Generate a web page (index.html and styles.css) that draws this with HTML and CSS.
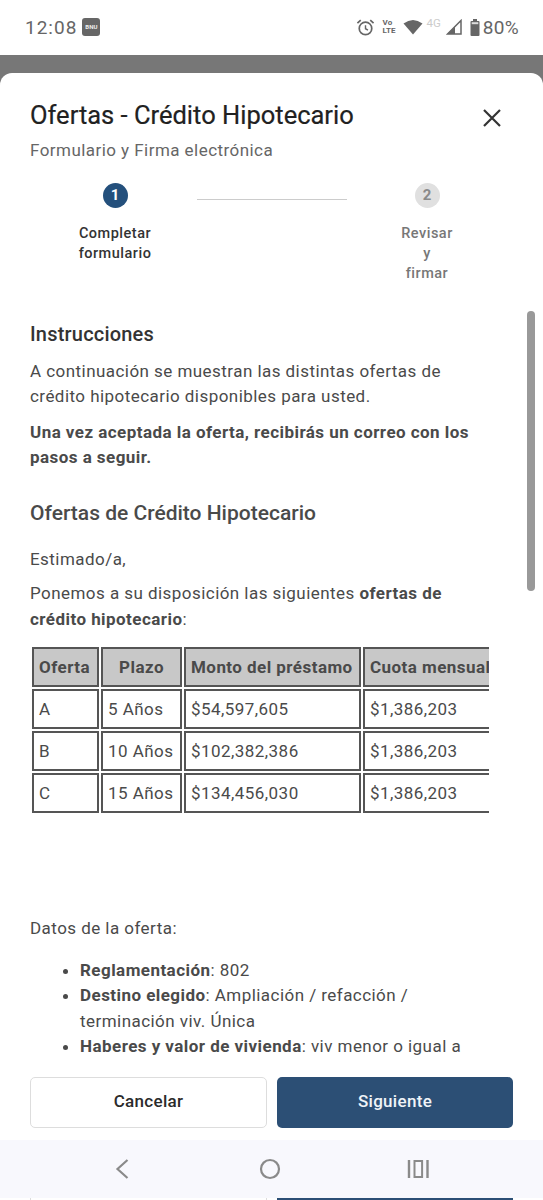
FILE: index.html
```html
<!DOCTYPE html>
<html lang="es">
<head>
<meta charset="utf-8">
<title>Ofertas - Crédito Hipotecario</title>
<link rel="stylesheet" href="styles.css">
</head>
<body>
<div class="phone">
  <header class="status">
    <div class="status-left">
      <span class="clock">12:08</span>
      <span class="app-badge">BNU</span>
    </div>
    <div class="status-right">
      <svg class="ico-alarm" viewBox="0 0 20 20" width="19" height="19"><circle cx="10" cy="11" r="6.6" fill="none" stroke="#666" stroke-width="1.8"/><path d="M10 7.5V11.3L12.6 12.8" fill="none" stroke="#666" stroke-width="1.5"/><path d="M1.5 5.5L5 2.3M18.5 5.5L15 2.3" stroke="#666" stroke-width="1.8"/></svg>
      <span class="volte"><span>Vo</span><span>LTE</span></span>
      <svg class="ico-wifi" viewBox="0 0 20 16" width="20" height="16"><path d="M0.5 4.5Q10 -2.5 19.5 4.5L10 15.5Z" fill="#666"/></svg>
      <span class="net">4G</span>
      <svg class="ico-signal" viewBox="0 0 16 16" width="16" height="16"><path d="M15 1.5V15H1.5Z" fill="none" stroke="#666" stroke-width="1.5"/><path d="M9 7.5V15H1.5Z" fill="#666"/></svg>
      <svg class="ico-battery" viewBox="0 0 10 17" width="10" height="17"><rect x="3" y="0" width="4" height="2" fill="#666"/><rect x="0.5" y="2" width="9" height="15" rx="1" fill="#666"/><rect x="1.7" y="3.2" width="6.6" height="2" fill="#ddd"/></svg>
      <span class="pct">80%</span>
    </div>
  </header>

  <div class="backdrop">
    <section class="sheet">
      <div class="sheet-head">
        <div class="titles">
          <h1>Ofertas - Crédito Hipotecario</h1>
          <p class="subtitle">Formulario y Firma electrónica</p>
        </div>
        <svg class="close" viewBox="0 0 20 20" width="20" height="20"><path d="M2 2L18 18M18 2L2 18" stroke="#333" stroke-width="2.2" fill="none"/></svg>
      </div>

      <div class="stepper">
        <div class="step step-one">
          <span class="dot dot-active">1</span>
          <span class="step-label">Completar<br>formulario</span>
        </div>
        <div class="step-line"></div>
        <div class="step step-two">
          <span class="dot dot-idle">2</span>
          <span class="step-label step-label-idle">Revisar<br>y<br>firmar</span>
        </div>
      </div>

      <div class="body-area">
        <div class="scroll-content">
          <h2 class="h-instr">Instrucciones</h2>
          <p class="para para-first">A continuación se muestran las distintas ofertas de crédito hipotecario disponibles para usted.</p>
          <p class="para para-strong"><strong>Una vez aceptada la oferta, recibirás un correo con los pasos a seguir.</strong></p>
          <h2 class="h-offers">Ofertas de Crédito Hipotecario</h2>
          <p class="para para-greet">Estimado/a,</p>
          <p class="para para-intro">Ponemos a su disposición las siguientes <strong>ofertas de crédito hipotecario</strong>:</p>
          <div class="table-wrap">
            <table class="offers">
              <thead>
                <tr><th class="c-a">Oferta</th><th class="c-b">Plazo</th><th class="c-c">Monto del préstamo</th><th class="c-d">Cuota mensual</th></tr>
              </thead>
              <tbody>
                <tr><td>A</td><td>5 Años</td><td>$54,597,605</td><td>$1,386,203</td></tr>
                <tr><td>B</td><td>10 Años</td><td>$102,382,386</td><td>$1,386,203</td></tr>
                <tr><td>C</td><td>15 Años</td><td>$134,456,030</td><td>$1,386,203</td></tr>
              </tbody>
            </table>
          </div>
          <p class="para para-data">Datos de la oferta:</p>
          <ul class="data-list">
            <li><strong>Reglamentación</strong>: 802</li>
            <li><strong>Destino elegido</strong>: Ampliación / refacción / terminación viv. Única</li>
            <li><strong>Haberes y valor de vivienda</strong>: viv menor o igual a</li>
          </ul>
        </div>
        <div class="scrollbar"></div>
      </div>

      <footer class="actions">
        <button class="btn btn-ghost" type="button">Cancelar</button>
        <button class="btn btn-primary" type="button">Siguiente</button>
      </footer>
    </section>
  </div>

  <nav class="navbar">
    <svg viewBox="0 0 16 22" width="16" height="22"><path d="M13.5 2L3.5 11L13.5 20" fill="none" stroke="#8a8a8a" stroke-width="2.2"/></svg>
    <svg viewBox="0 0 22 22" width="22" height="22"><circle cx="11" cy="11" r="9" fill="none" stroke="#8a8a8a" stroke-width="2.2"/></svg>
    <svg viewBox="0 0 22 20" width="22" height="20"><path d="M2 1V19M20.5 1V19" stroke="#8a8a8a" stroke-width="2.4"/><rect x="7.5" y="2" width="7.6" height="16" fill="none" stroke="#8a8a8a" stroke-width="2"/></svg>
  </nav>
  <div class="peek">
    <span class="peek-ghost"></span>
    <span class="peek-primary"></span>
  </div>
</div>
</body>
</html>
```
FILE: styles.css
```css
* { box-sizing: border-box; }
html, body { margin: 0; padding: 0; background: #fff; }
body { font-family: Roboto, "Liberation Sans", sans-serif; color: #4a4a4a; }
.phone { width: 543px; height: 1200px; display: flex; flex-direction: column; overflow: hidden; }

.status { height: 55px; flex: none; display: flex; justify-content: space-between; align-items: center; padding: 0 24px 1px 25px; background: #fff; color: #666; }
.status-left { display: flex; align-items: center; gap: 5px; }
.clock { font-size: 19px; letter-spacing: 1px; font-weight: 400; }
.app-badge { width: 18px; height: 18px; border-radius: 3px; background: #666; color: #eee; font-size: 6px; font-weight: 700; line-height: 18px; text-align: center; }
.status-right { display: flex; align-items: center; }
.ico-alarm { margin-right: 8px; }
.volte { display: flex; flex-direction: column; align-items: flex-start; font-size: 8px; font-weight: 700; line-height: 8px; margin-right: 7px; }
.ico-wifi { margin-right: 4px; }
.net { font-size: 11.5px; color: #ccc; margin: 0 5px 8px 0; }
.ico-signal { margin-right: 8px; }
.ico-battery { margin-right: 3px; }
.pct { font-size: 19px; letter-spacing: 0.3px; }

.backdrop { flex: 1; min-height: 0; background: #777; padding-top: 18px; display: flex; }
.sheet { flex: 1; min-width: 0; background: #fff; border-radius: 12px 12px 0 0; display: flex; flex-direction: column; }

.sheet-head { display: flex; justify-content: space-between; padding: 26px 41px 0 30px; }
h1 { margin: 0; font-size: 25.5px; line-height: 32px; font-weight: 400; color: #212121; -webkit-text-stroke: 0.2px #212121; }
.subtitle { margin: 8px 0 0; font-size: 17px; line-height: 22px; color: #666; letter-spacing: 0.45px; }
.close { margin-top: 9px; }

.stepper { display: grid; grid-template-columns: 167px 150px 166px; padding: 0 30px; margin-top: 22px; height: 117px; }
.step { display: flex; flex-direction: column; align-items: center; }
.step-one { margin-left: 3px; }
.step-two { margin-right: 3px; margin-left: -3px; }
.dot { width: 25px; height: 25px; border-radius: 50%; font-size: 15px; font-weight: 700; line-height: 25px; text-align: center; }
.dot-active { background: #24507c; color: #fff; }
.dot-idle { background: #e0e0e0; color: #8a8a8a; }
.step-label { margin-top: 16px; font-size: 14.5px; line-height: 20px; font-weight: 500; text-align: center; color: #333; letter-spacing: 0.5px; }
.step-label-idle { color: #777; }
.step-line { height: 1px; background: #ccc; margin-top: 16px; }

.body-area { flex: 1; min-height: 0; position: relative; overflow: hidden; }
.scroll-content { padding: 0 54px 0 30px; }
h2 { margin: 0; font-weight: 500; color: #333; }
.h-instr { font-size: 20px; line-height: 24px; margin-top: 22px; letter-spacing: 0.2px; }
.h-offers { font-size: 21px; line-height: 26px; margin-top: 31px; color: #4a4a4a; }
.para { margin: 0; font-size: 17px; line-height: 25px; letter-spacing: 0.45px; color: #4a4a4a; }
.para strong, .data-list strong { font-weight: 700; }
.para-first { margin-top: 13px; }
.para-strong { margin-top: 11px; line-height: 24.5px; }
.para-greet { margin-top: 21px; }
.para-intro { margin-top: 8px; line-height: 26px; }
.para-data { margin-top: 101px; }

.table-wrap { width: 459px; overflow: hidden; margin-top: 13px; }
.offers { border-collapse: separate; border-spacing: 2.5px; width: max-content; font-size: 17px; letter-spacing: 0.45px; }
.offers th, .offers td { border: 2px solid #555; height: 40px; padding: 0 5px; text-align: left; font-weight: 400; white-space: nowrap; }
.offers th { background: #c8c8c8; font-weight: 700; color: #4a4a4a; }
.offers th.c-b { text-align: center; }
.c-a { width: 67px; }
.c-b { width: 81px; }
.c-c { width: 177px; }
.c-d { width: 140px; }

.data-list { margin: 17px 0 0; padding: 0 0 0 50px; font-size: 17px; line-height: 25.3px; letter-spacing: 0.45px; color: #4a4a4a; }
.scrollbar { position: absolute; right: 8px; top: 11px; width: 8px; height: 280px; border-radius: 4px; background: #999; }

.actions { flex: none; height: 81px; display: grid; grid-template-columns: 237px 236px; gap: 10px; padding: 18px 30px 12px; background: #fff; }
.btn { font-family: inherit; font-size: 17px; font-weight: 500; letter-spacing: 0.3px; border-radius: 5px; height: 51px; padding: 0 0 3px; }
.btn-ghost { background: #fff; border: 1.5px solid #ddd; color: #2b2b2b; }
.btn-primary { background: #2c4f75; border: 0; color: #f0f4f8; }

.navbar { flex: none; height: 58px; background: #f8f8fd; display: grid; grid-template-columns: repeat(3, 148px); justify-items: center; align-items: center; padding-left: 48px; }
.peek { flex: none; height: 2px; background: #fff; display: grid; grid-template-columns: 237px 236px; gap: 10px; padding: 0 30px; }
.peek-ghost { border: solid #ddd; border-width: 0 1px; }
.peek-primary { background: #2c4f75; }
```
